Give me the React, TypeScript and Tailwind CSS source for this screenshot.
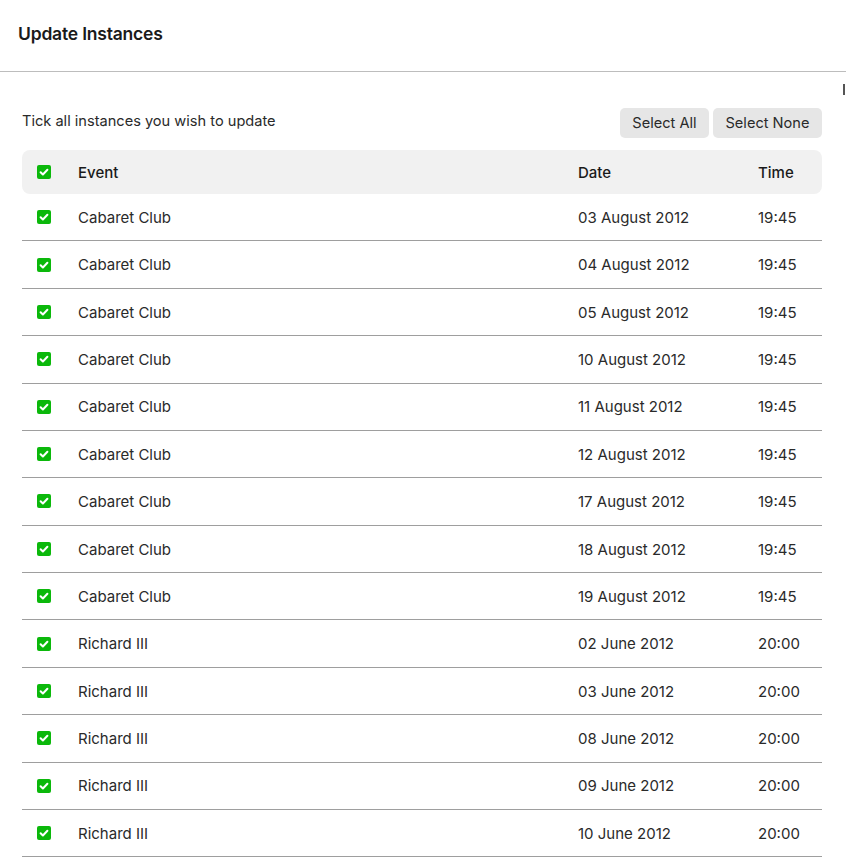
const rows: [string, string, string][] = [
  ["Cabaret Club", "03 August 2012", "19:45"],
  ["Cabaret Club", "04 August 2012", "19:45"],
  ["Cabaret Club", "05 August 2012", "19:45"],
  ["Cabaret Club", "10 August 2012", "19:45"],
  ["Cabaret Club", "11 August 2012", "19:45"],
  ["Cabaret Club", "12 August 2012", "19:45"],
  ["Cabaret Club", "17 August 2012", "19:45"],
  ["Cabaret Club", "18 August 2012", "19:45"],
  ["Cabaret Club", "19 August 2012", "19:45"],
  ["Richard III", "02 June 2012", "20:00"],
  ["Richard III", "03 June 2012", "20:00"],
  ["Richard III", "08 June 2012", "20:00"],
  ["Richard III", "09 June 2012", "20:00"],
  ["Richard III", "10 June 2012", "20:00"],
];

function Check() {
  return (
    <span className="flex h-[14px] w-[14px] items-center justify-center rounded-[2px] bg-[#0bb80b]">
      <svg viewBox="0 0 14 14" className="h-[14px] w-[14px]">
        <path d="M3.6 7.2l2.3 2.3 4.5-4.7" fill="none" stroke="white" strokeWidth="2" strokeLinecap="round" strokeLinejoin="round" />
      </svg>
    </span>
  );
}

export default function App() {
  return (
    <div className="relative min-h-screen overflow-hidden bg-white text-[#1a1a1a] font-['Inter','Noto_Sans',sans-serif]">
      <div className="h-[72px] border-b border-[#bdbdbd] px-[18px] pt-[21px]">
        <h1 className="text-[17.5px] font-semibold tracking-[-0.2px]">Update Instances</h1>
      </div>
      <div className="absolute right-[1px] top-[84px] h-[11px] w-[2px] bg-[#555]" />

      <div className="ml-[22px] w-[800px] pt-[36px]">
        <div className="flex items-center justify-between">
          <p className="-mt-[2px] text-[14.6px] text-[#2a2a2a]">Tick all instances you wish to update</p>
          <div className="flex gap-[4px]">
            <button className="h-[30px] w-[89px] rounded-[5px] bg-[#e6e6e6] pt-[1px] text-[14.6px] text-[#2a2a2a]">Select All</button>
            <button className="h-[30px] w-[109px] rounded-[5px] bg-[#e6e6e6] pt-[1px] text-[14.6px] text-[#2a2a2a]">Select None</button>
          </div>
        </div>

        <div className="mt-[12px]">
          <div className="grid h-[44px] grid-cols-[41px_500px_180px_1fr] items-center rounded-[8px] bg-[#f1f1f1] pl-[15px] text-[15px] font-medium">
            <Check />
            <span className="pt-[2px]">Event</span>
            <span className="pt-[2px]">Date</span>
            <span className="pt-[2px]">Time</span>
          </div>
          {rows.map((r, i) => (
            <div
              key={i}
              className="grid h-[47.38px] grid-cols-[41px_500px_180px_1fr] items-center border-b border-[#9e9e9e] pl-[15px] text-[15px] text-[#2a2a2a]"
            >
              <Check />
              <span className="pt-[2px]">{r[0]}</span>
              <span className="pt-[2px]">{r[1]}</span>
              <span className="pt-[2px]">{r[2]}</span>
            </div>
          ))}
        </div>
      </div>
    </div>
  );
}
